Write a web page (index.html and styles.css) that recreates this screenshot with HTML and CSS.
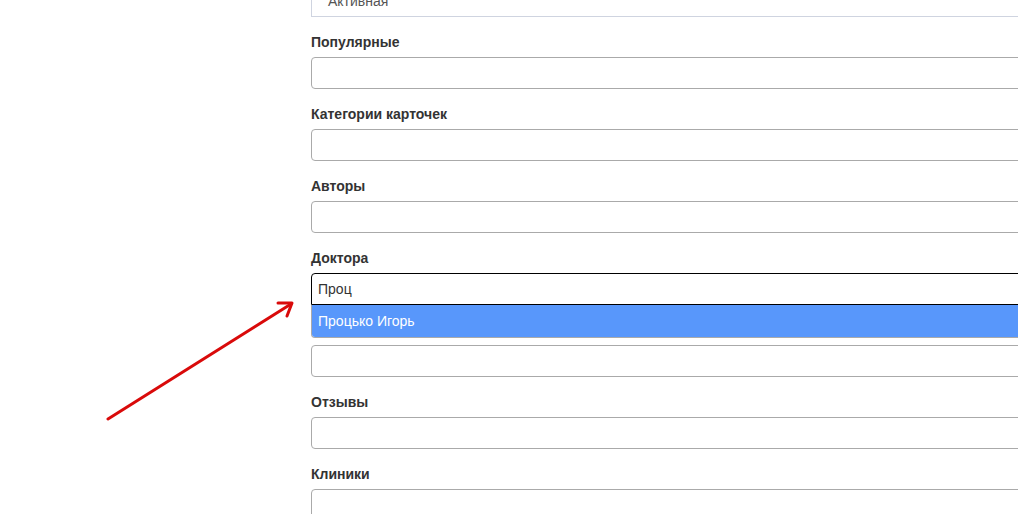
FILE: index.html
```html
<!DOCTYPE html>
<html lang="ru">
<head>
    <meta charset="UTF-8">
    <title>Редактирование</title>
    <link rel="stylesheet" href="styles.css">
</head>
<body>
    <div class="page">
        <form class="edit-form">
            <div class="form-group first">
                <div class="select-box">Активная</div>
            </div>
            <div class="form-group">
                <label>Популярные</label>
                <div class="multi-input"></div>
            </div>
            <div class="form-group">
                <label>Категории карточек</label>
                <div class="multi-input"></div>
            </div>
            <div class="form-group">
                <label>Авторы</label>
                <div class="multi-input"></div>
            </div>
            <div class="form-group doctors">
                <label>Доктора</label>
                <div class="multi-input focused">Проц</div>
                <ul class="dropdown">
                    <li class="highlighted">Процько Игорь</li>
                </ul>
            </div>
            <div class="form-group">
                <label class="covered"></label>
                <div class="multi-input"></div>
            </div>
            <div class="form-group">
                <label>Отзывы</label>
                <div class="multi-input"></div>
            </div>
            <div class="form-group">
                <label>Клиники</label>
                <div class="multi-input"></div>
            </div>
        </form>

        <svg class="arrow" width="1018" height="514" viewBox="0 0 1018 514">
            <line x1="108" y1="419" x2="291" y2="304" stroke="#d90a0a" stroke-width="3" stroke-linecap="round"/>
            <path d="M278 303 L292 303 L287 316" fill="none" stroke="#d90a0a" stroke-width="3" stroke-linecap="round" stroke-linejoin="round"/>
        </svg>
    </div>
</body>
</html>
```

FILE: styles.css
```css
body{
    margin: 0;
    background: #fff;
    font-family: "Liberation Sans", Arial, sans-serif;
    font-size: 14px;
    color: #333;
    overflow: hidden;
}
.page{
    position: relative;
    width: 1018px;
    height: 514px;
    overflow: hidden;
}
.edit-form{
    margin-left: 311px;
    margin-top: -15px;
    width: 900px;
}
.form-group{
    position: relative;
    margin-bottom: 15px;
}
.form-group label{
    display: block;
    font-weight: bold;
    line-height: 20px;
    margin-bottom: 5px;
}
.form-group label.covered{
    height: 20px;
}
.select-box{
    box-sizing: border-box;
    height: 32px;
    border: 1px solid #cfd4e0;
    padding: 6px 16px;
    line-height: 18px;
    color: #555;
}
.multi-input{
    box-sizing: border-box;
    height: 32px;
    border: 1px solid #aaa;
    border-radius: 4px;
    padding: 6px 6px;
    line-height: 18px;
}
.multi-input.focused{
    border-color: #000;
    border-radius: 4px 4px 0 0;
    color: #333;
}
.dropdown{
    position: absolute;
    left: 0;
    right: 0;
    top: 57px;
    margin: 0;
    padding: 0;
    list-style: none;
    border: 1px solid #aaa;
    border-top: none;
    border-radius: 0 0 4px 4px;
    background: #fff;
    overflow: hidden;
    z-index: 2;
}
.dropdown li{
    height: 32px;
    box-sizing: border-box;
    padding: 7px 6px;
    line-height: 18px;
}
.dropdown li.highlighted{
    background: #5897fb;
    color: #fff;
}
.arrow{
    position: absolute;
    left: 0;
    top: 0;
    pointer-events: none;
}
```
